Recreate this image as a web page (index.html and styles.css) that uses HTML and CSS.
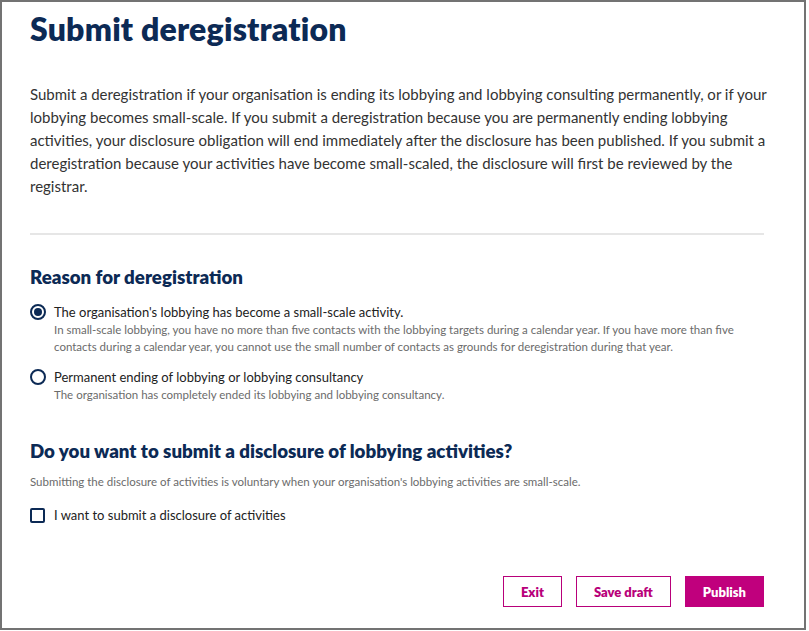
FILE: index.html
```html
<!DOCTYPE html>
<html lang="en">
<head>
<meta charset="utf-8">
<title>Submit deregistration</title>
<link rel="stylesheet" href="styles.css">
</head>
<body>
<div class="frame">
  <main class="page">
    <h1 class="title">Submit deregistration</h1>
    <p class="intro">Submit a deregistration if your organisation is ending its lobbying and lobbying consulting permanently, or if your lobbying becomes small-scale. If you submit a deregistration because you are permanently ending lobbying activities, your disclosure obligation will end immediately after the disclosure has been published. If you submit a deregistration because your activities have become small-scaled, the disclosure will first be reviewed by the registrar.</p>
    <hr class="divider">
    <section class="section">
      <h2 class="heading">Reason for deregistration</h2>
      <div class="options">
        <label class="option">
          <span class="radio checked"></span>
          <span class="option-text">
            <span class="option-label">The organisation's lobbying has become a small-scale activity.</span>
            <span class="option-desc">In small-scale lobbying, you have no more than five contacts with the lobbying targets during a calendar year. If you have more than five contacts during a calendar year, you cannot use the small number of contacts as grounds for deregistration during that year.</span>
          </span>
        </label>
        <label class="option">
          <span class="radio"></span>
          <span class="option-text">
            <span class="option-label">Permanent ending of lobbying or lobbying consultancy</span>
            <span class="option-desc">The organisation has completely ended its lobbying and lobbying consultancy.</span>
          </span>
        </label>
      </div>
    </section>
    <section class="section second">
      <h2 class="heading">Do you want to submit a disclosure of lobbying activities?</h2>
      <p class="helper">Submitting the disclosure of activities is voluntary when your organisation's lobbying activities are small-scale.</p>
      <label class="check-row">
        <span class="checkbox"></span>
        <span class="option-label">I want to submit a disclosure of activities</span>
      </label>
    </section>
    <div class="actions">
      <button class="btn btn-outline">Exit</button>
      <button class="btn btn-outline">Save draft</button>
      <button class="btn btn-primary">Publish</button>
    </div>
  </main>
</div>
</body>
</html>
```
FILE: styles.css
```css
* { box-sizing: border-box; }
html, body { margin: 0; padding: 0; background: #ffffff; }
body {
  font-family: Lato, "Noto Sans", "Liberation Sans", sans-serif;
  color: #333333;
}
.frame {
  width: 806px;
  height: 630px;
  border: 2px solid #737373;
  background: #ffffff;
  overflow: hidden;
}
.page {
  padding: 8px 40px 0 28px;
  display: flex;
  flex-direction: column;
}
.title {
  margin: 0;
  font-size: 32px;
  line-height: 38px;
  font-weight: 800;
  color: #0c2a55;
  letter-spacing: 0.2px;
}
.intro {
  margin: 35px -6px 0 0;
  font-size: 15px;
  line-height: 23px;
  color: #333333;
}
.divider {
  margin: 35px 0 0;
  border: 0;
  height: 2px;
  background: #e6e6e6;
}
.section { margin-top: 30px; }
.section.second { margin-top: 36px; }
.heading {
  margin: 0;
  font-size: 18.7px;
  line-height: 24px;
  font-weight: 800;
  color: #0c2a55;
}
.options {
  margin-top: 15px;
  display: flex;
  flex-direction: column;
  gap: 14px;
}
.option, .check-row {
  display: flex;
  align-items: flex-start;
  gap: 8px;
}
.check-row { gap: 9px; }
.radio {
  flex: none;
  width: 16px;
  height: 16px;
  margin-top: 0;
  border: 2px solid #0c2a55;
  border-radius: 50%;
  display: flex;
  align-items: center;
  justify-content: center;
}
.radio.checked::after {
  content: "";
  width: 8px;
  height: 8px;
  border-radius: 50%;
  background: #0c2a55;
}
.option-text {
  display: flex;
  flex-direction: column;
}
.option-label {
  font-size: 13px;
  line-height: 17px;
  color: #222222;
}
.option-desc {
  font-size: 11.5px;
  line-height: 17px;
  color: #6b6b6b;
}
.helper {
  margin: 10px 0 0;
  font-size: 11.5px;
  line-height: 17px;
  color: #6b6b6b;
}
.check-row { margin-top: 17px; }
.checkbox {
  flex: none;
  width: 15px;
  height: 15px;
  margin-top: 1px;
  border: 2px solid #0c2a55;
  border-radius: 2px;
}
.actions {
  margin-top: 52px;
  display: flex;
  justify-content: flex-end;
  gap: 14px;
}
.btn {
  height: 31px;
  padding: 0 17px;
  font-family: inherit;
  font-size: 13px;
  font-weight: 800;
  border: 1px solid #b8007a;
  background: #ffffff;
  color: #b8007a;
  cursor: pointer;
}
.btn-primary {
  background: #c0007d;
  color: #ffffff;
  border-color: #c0007d;
}
```
